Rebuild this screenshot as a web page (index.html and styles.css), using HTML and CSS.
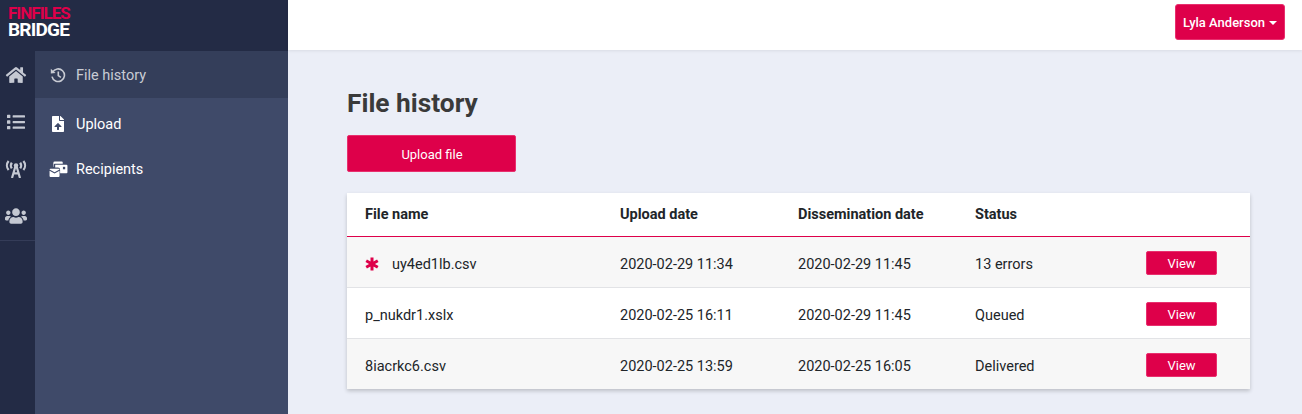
FILE: index.html
```html
<!doctype html>
<html>
  <head>
    <title>File history</title>
    <link rel="stylesheet" href="styles.css">
  </head>
  <body>
    <aside class="sidebar">
      <div class="logo">
        <span class="logo-top">FINFILES</span>
        <span class="logo-bottom">BRIDGE</span>
      </div>
      <div class="sidebar-body">
        <nav class="rail">
          <a class="rail-item">
            <svg class="rail-icon" viewBox="0 0 576 512"><path d="M280.37 148.26L96 300.11V464a16 16 0 0 0 16 16l112.06-.29a16 16 0 0 0 15.92-16V368a16 16 0 0 1 16-16h64a16 16 0 0 1 16 16v95.64a16 16 0 0 0 16 16.05L464 480a16 16 0 0 0 16-16V300L295.67 148.26a12.19 12.19 0 0 0-15.3 0zM571.6 251.47L488 182.56V44.05a12 12 0 0 0-12-12h-56a12 12 0 0 0-12 12v72.61L318.47 43a48 48 0 0 0-61 0L4.34 251.47a12 12 0 0 0-1.6 16.9l25.5 31A12 12 0 0 0 45.15 301l235.22-193.74a12.19 12.19 0 0 1 15.3 0L530.9 301a12 12 0 0 0 16.9-1.6l25.5-31a12 12 0 0 0-1.7-16.93z"/></svg>
          </a>
          <a class="rail-item">
            <svg class="rail-icon" viewBox="0 0 512 512"><path d="M80 368H16a16 16 0 0 0-16 16v64a16 16 0 0 0 16 16h64a16 16 0 0 0 16-16v-64a16 16 0 0 0-16-16zm0-320H16A16 16 0 0 0 0 64v64a16 16 0 0 0 16 16h64a16 16 0 0 0 16-16V64a16 16 0 0 0-16-16zm0 160H16a16 16 0 0 0-16 16v64a16 16 0 0 0 16 16h64a16 16 0 0 0 16-16v-64a16 16 0 0 0-16-16zm416 176H176a16 16 0 0 0-16 16v32a16 16 0 0 0 16 16h320a16 16 0 0 0 16-16v-32a16 16 0 0 0-16-16zm0-320H176a16 16 0 0 0-16 16v32a16 16 0 0 0 16 16h320a16 16 0 0 0 16-16V80a16 16 0 0 0-16-16zm0 160H176a16 16 0 0 0-16 16v32a16 16 0 0 0 16 16h320a16 16 0 0 0 16-16v-32a16 16 0 0 0-16-16z"/></svg>
          </a>
          <a class="rail-item">
            <svg class="rail-icon" viewBox="0 0 22 18"><path class="thin" d="M3.6 1C1.4 3.6 1.4 7.4 3.6 10M6.8 2.6C5.6 4.4 5.6 6.6 6.8 8.4M18.4 1C20.6 3.6 20.6 7.4 18.4 10M15.2 2.6C16.4 4.4 16.4 6.6 15.2 8.4"/><circle cx="11" cy="5.5" r="2.2"/><path class="thin" d="M10.4 6.5L7 18M11.6 6.5L15 18M8.5 13.4h5"/></svg>
          </a>
          <a class="rail-item">
            <svg class="rail-icon" viewBox="0 0 640 512"><path d="M96 224c35.3 0 64-28.7 64-64s-28.7-64-64-64-64 28.7-64 64 28.7 64 64 64zm448 0c35.3 0 64-28.7 64-64s-28.7-64-64-64-64 28.7-64 64 28.7 64 64 64zm32 32h-64c-17.6 0-33.5 7.1-45.1 18.6 40.3 22.1 68.9 62 75.1 109.4h66c17.7 0 32-14.3 32-32v-32c0-35.3-28.7-64-64-64zm-256 0c61.9 0 112-50.1 112-112S381.9 32 320 32 208 82.1 208 144s50.1 112 112 112zm76.8 32h-8.3c-20.8 10-43.9 16-68.5 16s-47.6-6-68.5-16h-8.3C179.6 288 128 339.6 128 403.2V432c0 26.5 21.5 48 48 48h288c26.5 0 48-21.5 48-48v-28.8c0-63.6-51.6-115.2-115.2-115.2zm-223.7-13.4C161.5 263.1 145.6 256 128 256H64c-35.3 0-64 28.7-64 64v32c0 17.7 14.3 32 32 32h65.9c6.3-47.4 34.9-87.3 75.2-109.4z"/></svg>
          </a>
          <div class="rail-divider"></div>
        </nav>
        <nav class="subnav">
          <a class="subnav-item active">
            <svg class="subnav-icon" viewBox="0 0 16 16"><path class="line" d="M2.6 5.2A6.3 6.3 0 1 1 2 9.6M8.3 4.6v4l2.6 1.7"/><path d="M0.8 1.8L5.6 5.9 0.8 6.6z"/></svg>
            <span>File history</span>
          </a>
          <a class="subnav-item upload">
            <svg class="subnav-icon" viewBox="0 0 384 512"><path d="M224 136V0H24C10.7 0 0 10.7 0 24v464c0 13.3 10.7 24 24 24h336c13.3 0 24-10.7 24-24V160H248c-13.2 0-24-10.8-24-24zm65.18 216.01H224v80c0 8.84-7.16 16-16 16h-32c-8.84 0-16-7.16-16-16v-80H94.82c-14.28 0-21.41-17.29-11.27-27.36l96.42-95.7c6.65-6.61 17.39-6.61 24.04 0l96.42 95.7c10.15 10.07 3.03 27.36-11.25 27.36zM377 105L279.1 7c-4.5-4.5-10.6-7-17-7H256v128h128v-6.1c0-6.3-2.5-12.4-7-16.9z"/></svg>
            <span>Upload</span>
          </a>
          <a class="subnav-item recipients">
            <svg class="subnav-icon wide" viewBox="0 0 19 17"><path d="M5.5 0.5h7.5a1 1 0 0 1 1 1V3H5.5a1 1 0 0 0-1 1v2H4V2a1.5 1.5 0 0 1 1.5-1.5z"/><path d="M6 4h12a1 1 0 0 1 1 1v7a1 1 0 0 1-1 1h-6.8V9.2A2.2 2.2 0 0 0 9 7H6z"/><rect class="hole" x="14.2" y="6.2" width="2.4" height="2.6"/><path d="M1 8.2h8.6a1 1 0 0 1 1 .9L5.3 12 0 9.1a1 1 0 0 1 1-.9z"/><path d="M0 10.4l5.3 2.9 5.3-2.9V16a1 1 0 0 1-1 1H1a1 1 0 0 1-1-1z"/></svg>
            <span>Recipients</span>
          </a>
        </nav>
      </div>
    </aside>
    <div class="content">
      <header class="topbar">
        <button class="user-btn">Lyla Anderson<span class="caret"></span></button>
      </header>
      <main class="page">
        <h1>File history</h1>
        <button class="upload-btn">Upload file</button>
        <table class="files">
          <thead>
            <tr>
              <th class="col-name">File name</th>
              <th class="col-upload">Upload date</th>
              <th class="col-diss">Dissemination date</th>
              <th class="col-status">Status</th>
              <th></th>
            </tr>
          </thead>
          <tbody>
            <tr>
              <td>
                <div class="name-cell">
                  <svg class="star" viewBox="0 0 14 14"><path d="M7 0.5v13M1.2 3.7l11.6 6.6M12.8 3.7L1.2 10.3"/></svg>
                  <span>uy4ed1lb.csv</span>
                </div>
              </td>
              <td>2020-02-29 11:34</td>
              <td>2020-02-29 11:45</td>
              <td>13 errors</td>
              <td class="action-cell"><button class="view-btn">View</button></td>
            </tr>
            <tr>
              <td>p_nukdr1.xslx</td>
              <td>2020-02-25 16:11</td>
              <td>2020-02-29 11:45</td>
              <td>Queued</td>
              <td class="action-cell"><button class="view-btn">View</button></td>
            </tr>
            <tr>
              <td>8iacrkc6.csv</td>
              <td>2020-02-25 13:59</td>
              <td>2020-02-25 16:05</td>
              <td>Delivered</td>
              <td class="action-cell"><button class="view-btn">View</button></td>
            </tr>
          </tbody>
        </table>
      </main>
    </div>
  </body>
</html>
```

FILE: styles.css
```css
:root {
  --navy: #232b45;
  --slate: #3f4a69;
  --slate-dark: #343e5a;
  --crimson: #de004a;
  --page-bg: #ebeef7;
  --text-color: #212529;
}

* {
  box-sizing: border-box;
}

html,
body {
  height: 100%;
}

body {
  margin: 0;
  display: flex;
  overflow: hidden;
  font-family: Roboto, 'Liberation Sans', sans-serif;
  font-size: 14.5px;
  color: var(--text-color);
  background-color: var(--page-bg);
}

.sidebar {
  width: 288px;
  flex-shrink: 0;
  display: flex;
  flex-direction: column;
  background-color: var(--navy);
}

.logo {
  height: 51px;
  padding: 5px 0 0 8px;
  display: flex;
  flex-direction: column;
  font-weight: 700;
  letter-spacing: -1px;
}

.logo-top {
  font-size: 17px;
  line-height: 17px;
  color: var(--crimson);
}

.logo-bottom {
  font-size: 19px;
  line-height: 16px;
  letter-spacing: -0.8px;
  color: #fff;
}

.sidebar-body {
  flex: 1;
  display: flex;
}

.rail {
  width: 35px;
  flex-shrink: 0;
}

.rail-item {
  height: 47.25px;
  padding-right: 4px;
  display: flex;
  align-items: center;
  justify-content: center;
}

.rail-icon {
  width: 22px;
  height: 18px;
  flex-shrink: 0;
  fill: #c4c8d2;
}

.rail-icon .thin {
  fill: none;
  stroke: #c4c8d2;
  stroke-width: 2.2;
}

.rail-divider {
  height: 1px;
  background-color: #343c58;
}

.subnav {
  flex: 1;
  background-color: var(--slate);
}

.subnav-item {
  height: 47px;
  padding-left: 15px;
  display: flex;
  align-items: center;
  gap: 10px;
  color: #fff;
}

.subnav-item.active {
  background-color: var(--slate-dark);
  color: #c9ccd4;
}

.subnav-item.active span {
  margin-top: 2px;
}

.subnav-item.upload {
  height: 52px;
}

.subnav-item.recipients {
  height: 38px;
}

.subnav-icon {
  width: 16px;
  height: 16px;
  fill: currentColor;
  flex-shrink: 0;
}

.subnav-icon.wide {
  width: 19px;
  margin: 0 -2px 0 -1px;
}

.subnav-icon .line {
  fill: none;
  stroke: currentColor;
  stroke-width: 1.6;
}

.subnav-icon .hole {
  fill: var(--slate);
}

.content {
  flex: 1;
  min-width: 0;
}

.topbar {
  height: 50px;
  padding: 4px 17px 0 0;
  display: flex;
  justify-content: flex-end;
  background-color: #fff;
  box-shadow: 0 1px 3px rgba(0, 0, 0, 0.08);
}

.user-btn {
  width: 110px;
  height: 36px;
  padding: 0;
  border: 1px solid #e8306e;
  border-radius: 3px;
  background-color: var(--crimson);
  color: #fff;
  font-family: inherit;
  font-size: 13px;
  font-weight: 500;
}

.caret {
  display: inline-block;
  margin-left: 4px;
  vertical-align: 2px;
  border-top: 4px solid #fff;
  border-left: 4px solid transparent;
  border-right: 4px solid transparent;
}

.page {
  padding: 38px 52px 0 59px;
}

h1 {
  margin: 0 0 16px;
  font-size: 26.3px;
  line-height: 31px;
  font-weight: 700;
  color: #3a3a3a;
}

.upload-btn {
  display: block;
  width: 169px;
  height: 37px;
  padding: 2px 0 0 1px;
  border: 1px solid #e8306e;
  border-radius: 2px;
  background-color: var(--crimson);
  color: #fff;
  font-family: inherit;
  font-size: 13px;
}

.files {
  width: 903px;
  margin-top: 21px;
  border-collapse: collapse;
  table-layout: fixed;
  background-color: #fff;
  box-shadow: 0 2px 4px rgba(0, 0, 0, 0.2);
}

.files th {
  height: 43px;
  padding: 0 0 0 18px;
  text-align: left;
  font-size: 14.5px;
  font-weight: 700;
  color: #212529;
}

.files thead tr {
  border-bottom: 1px solid var(--crimson);
}

.files td {
  height: 51px;
  padding: 6px 0 0 18px;
  font-size: 14.5px;
  border-top: 1px solid #e2e3e6;
}

.files td.action-cell {
  padding-top: 2px;
}

.files tbody tr:first-child td {
  border-top: none;
}

.files tbody tr:nth-child(odd) {
  background-color: #f7f7f7;
}

.col-name {
  width: 255px;
}

.col-upload {
  width: 178px;
}

.col-diss {
  width: 177px;
}

.col-status {
  width: 171px;
}

.name-cell {
  display: flex;
  align-items: center;
  gap: 13px;
}

.star {
  width: 14px;
  height: 14px;
  margin-top: -2px;
  fill: none;
  stroke: var(--crimson);
  stroke-width: 3;
}

.view-btn {
  display: block;
  width: 71px;
  height: 24px;
  padding: 2px 0 0;
  border: 1px solid #e8306e;
  border-radius: 2px;
  background-color: var(--crimson);
  color: #fff;
  font-family: inherit;
  font-size: 13px;
}
```
